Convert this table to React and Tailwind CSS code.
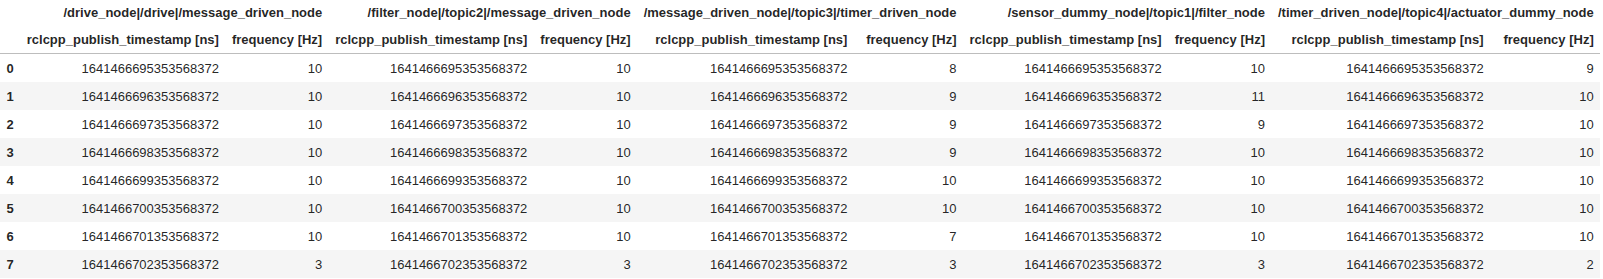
import { Fragment } from "react";

const groups = [
  { name: "/drive_node|/drive|/message_driven_node", freq: [10, 10, 10, 10, 10, 10, 10, 3] },
  { name: "/filter_node|/topic2|/message_driven_node", freq: [10, 10, 10, 10, 10, 10, 10, 3] },
  { name: "/message_driven_node|/topic3|/timer_driven_node", freq: [8, 9, 9, 9, 10, 10, 7, 3] },
  { name: "/sensor_dummy_node|/topic1|/filter_node", freq: [10, 11, 9, 10, 10, 10, 10, 3] },
  { name: "/timer_driven_node|/topic4|/actuator_dummy_node", freq: [9, 10, 10, 10, 10, 10, 10, 2] },
];

const stamps = [0, 1, 2, 3, 4, 5, 6, 7].map((i) =>
  (1641466695353568372n + BigInt(i) * 1000000000n).toString()
);

const cell = "px-[6.5px] py-[6.5px] text-right align-middle leading-[15px] whitespace-nowrap";

export default function App() {
  return (
    <div className="bg-white min-h-screen" style={{ fontFamily: '"Liberation Sans", Arial, sans-serif' }}>
      <table className="border-collapse text-[13px] text-black/[0.87]">
        <thead>
          <tr>
            <th className={`${cell} font-bold pt-[5px] pb-[5px]`}></th>
            {groups.map((g) => (
              <th key={g.name} colSpan={2} className={`${cell} font-bold pt-[5px] pb-[5px]`}>
                {g.name}
              </th>
            ))}
          </tr>
          <tr className="border-b border-[#bdbdbd]">
            <th className={`${cell} font-bold`}></th>
            {groups.map((g) => (
              <Fragment key={g.name}>
                <th className={`${cell} font-bold`}>rclcpp_publish_timestamp [ns]</th>
                <th className={`${cell} font-bold`}>frequency [Hz]</th>
              </Fragment>
            ))}
          </tr>
        </thead>
        <tbody>
          {stamps.map((ts, i) => (
            <tr key={i} className={i % 2 === 1 ? "bg-[#f5f5f5]" : "bg-white"}>
              <th className={`${cell} font-bold`}>{i}</th>
              {groups.map((g) => (
                <Fragment key={g.name}>
                  <td className={cell}>{ts}</td>
                  <td className={cell}>{g.freq[i]}</td>
                </Fragment>
              ))}
            </tr>
          ))}
        </tbody>
      </table>
    </div>
  );
}
